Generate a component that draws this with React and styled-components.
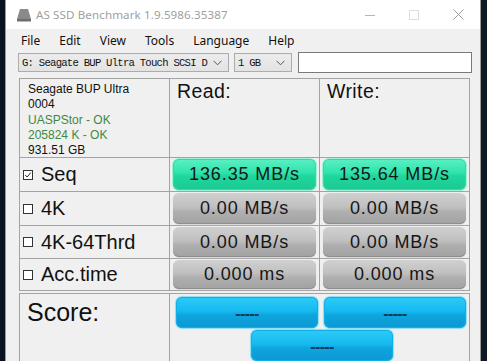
import React from 'react';
import styled, { createGlobalStyle, css } from 'styled-components';

const GlobalStyle = createGlobalStyle`
  html, body {
    margin: 0;
    padding: 0;
    background: #0b1422;
    overflow: hidden;
  }
`;

const Screen = styled.div`
  width: 487px;
  height: 361px;
  padding-left: 5px;
  box-sizing: border-box;
  overflow: hidden;
  background: linear-gradient(90deg, #0a1120 0%, #0d1828 100%);
`;

const Window = styled.div`
  width: 476px;
  height: 380px;
  box-sizing: border-box;
  border: 1px solid #9a9a9a;
  border-top: none;
  background: #f0f0f0;
  display: flex;
  flex-direction: column;
  font-family: "Liberation Sans", Arial, sans-serif;
`;

const TitleBar = styled.div`
  height: 29px;
  background: #ffffff;
  display: flex;
  align-items: center;
  padding-left: 10px;
  font-family: "Noto Sans", "Liberation Sans", sans-serif;
`;

const TitleText = styled.span`
  font-size: 11.6px;
  color: #a0a0a0;
  margin-left: 4px;
  letter-spacing: 0.1px;
`;

const WinControls = styled.div`
  margin-left: auto;
  display: flex;
  height: 100%;
`;

const WinButton = styled.div`
  width: 44px;
  height: 100%;
  display: flex;
  align-items: center;
  justify-content: center;
`;

const MenuBar = styled.div`
  height: 23px;
  display: flex;
  align-items: center;
  gap: 19px;
  padding-left: 15px;
  font-family: "Noto Sans", "Liberation Sans", sans-serif;
  font-size: 12px;
  color: #111;
`;

const Toolbar = styled.div`
  display: flex;
  align-items: center;
  height: 21px;
  padding-left: 12px;
  gap: 5px;
`;

const Combo = styled.div`
  width: ${p => p.$w}px;
  height: 19px;
  box-sizing: border-box;
  border: 1px solid #acacac;
  background: linear-gradient(#ececec, #e3e3e3);
  display: flex;
  align-items: center;
  padding-left: 3px;
  font-family: "Liberation Mono", "DejaVu Sans Mono", monospace;
  font-size: 10.6px;
  letter-spacing: -0.75px;
  color: #111;
  white-space: nowrap;
  overflow: hidden;
`;

const ComboText = styled.span`
  flex: 1;
  overflow: hidden;
`;

const Chevron = styled.svg`
  width: 9px;
  height: 6px;
  margin: 0 6px 0 2px;
  flex: none;
`;

const TextBox = styled.div`
  width: 174px;
  height: 21px;
  box-sizing: border-box;
  border: 1px solid #7a7a7a;
  background: #fff;
  margin-left: 1px;
`;

const Table = styled.div`
  margin: 5px 0 0 13px;
  width: 451px;
  display: grid;
  grid-template-columns: 149px 149px 149px;
  grid-template-rows: 78px 33px 33px 32px 31px;
  gap: 1px;
  padding: 1px;
  box-sizing: border-box;
  background: #a3a3a3;
`;

const ScoreTable = styled.div`
  margin: 2px 0 0 13px;
  width: 451px;
  display: grid;
  grid-template-columns: 149px 299px;
  gap: 1px;
  padding: 1px 1px 0 1px;
  box-sizing: border-box;
  background: #a3a3a3;
  flex: 1;
`;

const Cell = styled.div`
  background: #f0f0f0;
  box-sizing: border-box;
  min-width: 0;
`;

const InfoCell = styled(Cell)`
  padding: 3px 0 0 8px;
  font-size: 12px;
  line-height: 15.3px;
  color: #111;
`;

const InfoLine = styled.div`
  color: ${p => (p.$ok ? '#3d8a3d' : '#111')};
`;

const HeadCell = styled(Cell)`
  padding: 1px 0 0 7px;
  font-size: 19.5px;
  letter-spacing: 0.4px;
  color: #111;
`;

const LabelCell = styled(Cell)`
  display: flex;
  align-items: center;
  padding-left: 3px;
  font-size: 20px;
  color: #111;
`;

const Check = styled.span`
  width: 10px;
  height: 10px;
  box-sizing: border-box;
  border: 1px solid #333;
  background: #fff;
  margin-right: 8px;
  position: relative;
  flex: none;
`;

const ValueCell = styled(Cell)`
  padding: 1px 3px;
  display: flex;
`;

const tones = {
  green: css`
    background: linear-gradient(#5cf0c4 0%, #2ee3ac 45%, #1ed79d 55%, #1bc991 100%);
    box-shadow: inset 0 0 0 1px #35d9a6, 0 0 0 1px #9ff0d6;
  `,
  gray: css`
    background: linear-gradient(#d0d0d0 0%, #c0c0c0 45%, #afafaf 60%, #a2a2a2 100%);
    box-shadow: inset 0 -1px 0 #8d8d8d, 0 1px 1px #d8d8d8;
  `,
  blue: css`
    background: linear-gradient(#2ccbf7 0%, #17baf0 45%, #0ea5de 58%, #0b98d2 100%);
    box-shadow: inset 0 0 0 1px #14aee6, 0 0 1px 1px #8ddcf6;
  `,
};

const Bar = styled.div`
  flex: 1;
  border-radius: 6px;
  display: flex;
  align-items: center;
  justify-content: center;
  font-size: 18px;
  letter-spacing: 0.9px;
  color: #161616;
  ${p => tones[p.$tone]}
`;

const ScoreLabel = styled(Cell)`
  padding: 4px 0 0 7px;
  font-size: 25px;
  color: #111;
`;

const ScoreCell = styled(Cell)`
  display: grid;
  grid-template-columns: 142px 142px;
  grid-auto-rows: 31px;
  column-gap: 6px;
  row-gap: 2px;
  padding: 3px 0 0 6px;
`;

const ScoreBar = styled(Bar)`
  font-size: 16px;
  font-weight: bold;
  letter-spacing: -0.6px;
  padding-top: 3px;
  color: #0d3a5e;
  ${p => p.$center && css`
    grid-column: 1 / 3;
    width: 142px;
    justify-self: center;
    margin-left: 2px;
  `}
`;

const DriveIcon = () => (
  <svg width="16" height="14" viewBox="0 0 16 14">
    <path d="M4 1 H12 L15 11 H1 Z" fill="#8a8a8a" />
    <rect x="1" y="11" width="14" height="2.5" fill="#6e6e6e" />
  </svg>
);

const ChevronIcon = () => (
  <Chevron viewBox="0 0 9 6">
    <path d="M0.5 0.8 L4.5 4.8 L8.5 0.8" fill="none" stroke="#555" strokeWidth="1" />
  </Chevron>
);

const rows = [
  { label: 'Seq', checked: true, tone: 'green', read: '136.35 MB/s', write: '135.64 MB/s' },
  { label: '4K', tone: 'gray', read: '0.00 MB/s', write: '0.00 MB/s' },
  { label: '4K-64Thrd', tone: 'gray', read: '0.00 MB/s', write: '0.00 MB/s' },
  { label: 'Acc.time', tone: 'gray', read: '0.000 ms', write: '0.000 ms' },
];

const App = () => (
  <Screen>
    <GlobalStyle />
    <Window>
      <TitleBar>
        <DriveIcon />
        <TitleText>AS SSD Benchmark 1.9.5986.35387</TitleText>
        <WinControls>
          <WinButton>
            <svg width="10" height="10" viewBox="0 0 10 10">
              <path d="M0 5.5 H10" stroke="#b5b5b5" strokeWidth="1" />
            </svg>
          </WinButton>
          <WinButton>
            <svg width="10" height="10" viewBox="0 0 10 10">
              <rect x="0.5" y="0.5" width="9" height="9" fill="none" stroke="#dedede" strokeWidth="1" />
            </svg>
          </WinButton>
          <WinButton>
            <svg width="11" height="11" viewBox="0 0 11 11">
              <path d="M0.5 0.5 L10.5 10.5 M10.5 0.5 L0.5 10.5" stroke="#9a9a9a" strokeWidth="1" />
            </svg>
          </WinButton>
        </WinControls>
      </TitleBar>
      <MenuBar>
        <span>File</span>
        <span>Edit</span>
        <span>View</span>
        <span>Tools</span>
        <span>Language</span>
        <span>Help</span>
      </MenuBar>
      <Toolbar>
        <Combo $w={211}>
          <ComboText>G: Seagate BUP Ultra Touch SCSI D</ComboText>
          <ChevronIcon />
        </Combo>
        <Combo $w={58}>
          <ComboText>1 GB</ComboText>
          <ChevronIcon />
        </Combo>
        <TextBox />
      </Toolbar>
      <Table>
        <InfoCell>
          <InfoLine>Seagate BUP Ultra</InfoLine>
          <InfoLine>0004</InfoLine>
          <InfoLine $ok>UASPStor - OK</InfoLine>
          <InfoLine $ok>205824 K - OK</InfoLine>
          <InfoLine>931.51 GB</InfoLine>
        </InfoCell>
        <HeadCell>Read:</HeadCell>
        <HeadCell>Write:</HeadCell>
        {rows.map(r => (
          <React.Fragment key={r.label}>
            <LabelCell>
              <Check>
                {r.checked && (
                  <svg width="8" height="8" viewBox="0 0 8 8" style={{ position: 'absolute', left: 0, top: 0 }}>
                    <path d="M1.2 4 L3.2 6 L6.8 1.6" fill="none" stroke="#222" strokeWidth="1" />
                  </svg>
                )}
              </Check>
              {r.label}
            </LabelCell>
            <ValueCell>
              <Bar $tone={r.tone}>{r.read}</Bar>
            </ValueCell>
            <ValueCell>
              <Bar $tone={r.tone}>{r.write}</Bar>
            </ValueCell>
          </React.Fragment>
        ))}
      </Table>
      <ScoreTable>
        <ScoreLabel>Score:</ScoreLabel>
        <ScoreCell>
          <ScoreBar $tone="blue">-----</ScoreBar>
          <ScoreBar $tone="blue">-----</ScoreBar>
          <ScoreBar $tone="blue" $center>-----</ScoreBar>
        </ScoreCell>
      </ScoreTable>
    </Window>
  </Screen>
);

export default App;
